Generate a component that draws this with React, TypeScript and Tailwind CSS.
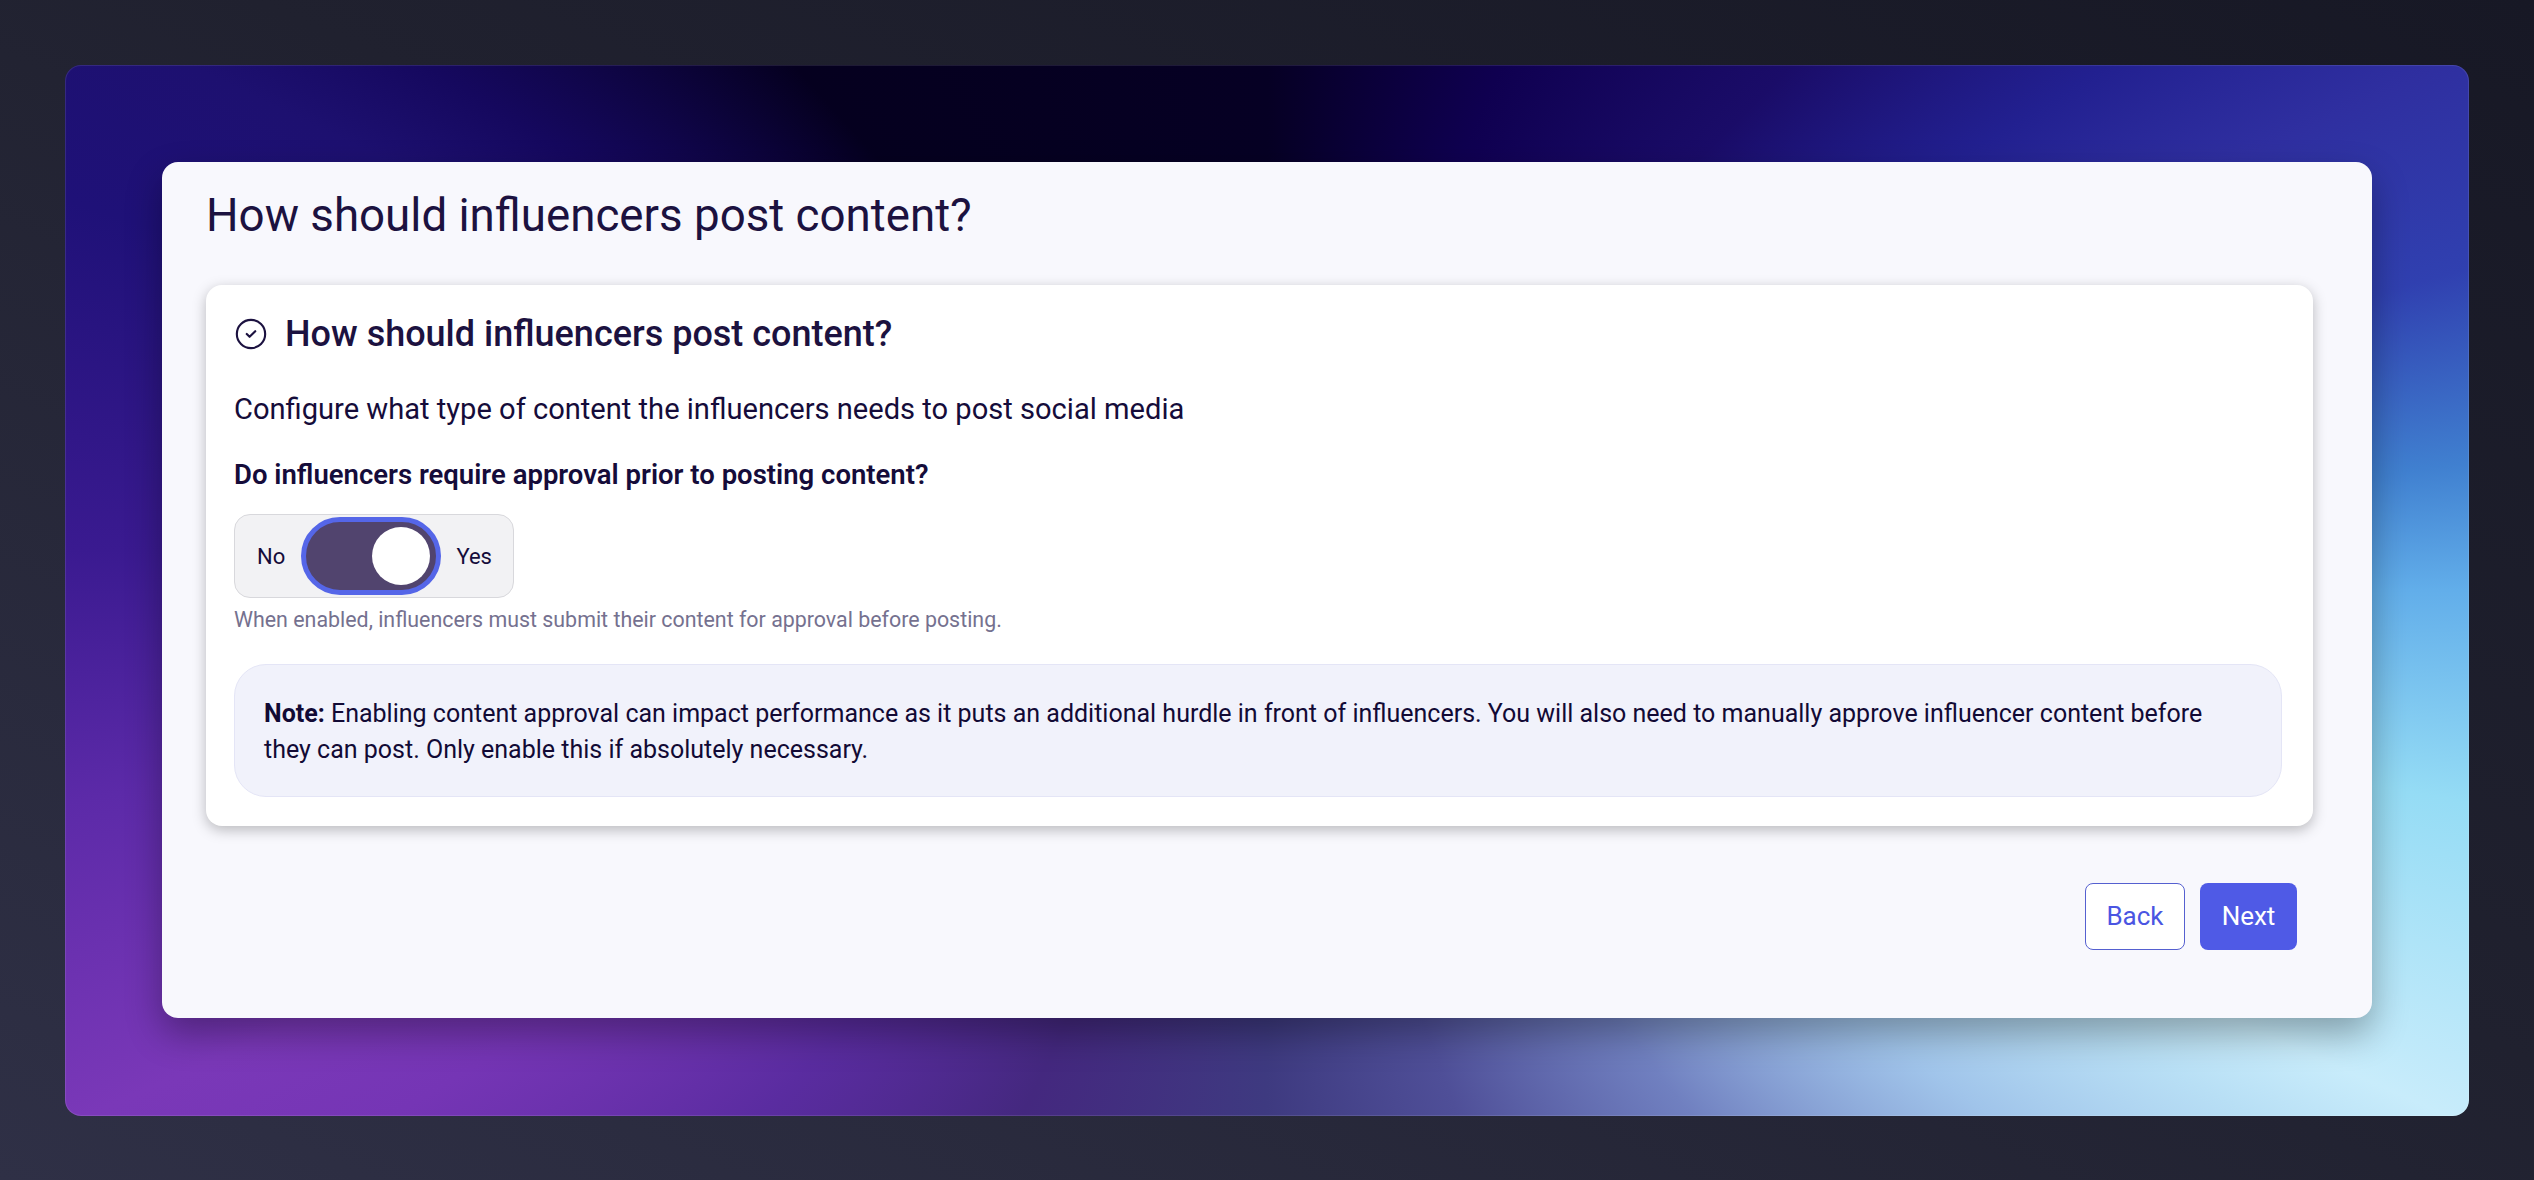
import { CircleCheck } from "lucide-react";

export default function App() {
  return (
    <div className="h-[1180px] w-full overflow-hidden bg-[linear-gradient(205deg,#171825_0%,#20212f_45%,#2f3046_100%)] px-[65px] pt-[65px] pb-[64px] font-['Roboto',sans-serif]">
      <div className="flex h-full flex-col rounded-2xl border border-white/10 bg-[conic-gradient(from_0deg_at_50%_50%,#060024_0deg,#0f0050_24deg,#1a0c68_45deg,#222090_58deg,#2f2fa0_66deg,#3040b0_75deg,#4080d0_84deg,#62aeea_90deg,#95dcf5_100deg,#c8ecfb_114deg,#b8dff5_118deg,#a0c4ea_126deg,#7080c0_141deg,#4f4f98_160deg,#3e3a80_180deg,#44287f_205deg,#5a2ca0_224deg,#7535b5_239deg,#7a38b8_246deg,#5c2aa8_260deg,#3a1a90_272deg,#1f1178_288deg,#1d1070_296deg,#15085e_302deg,#05001f_318deg,#060024_360deg)] bg-origin-border px-[96px] pt-[96px]">
        <div className="h-[856px] rounded-2xl bg-[#f8f8fd] pt-[26px] pr-[59px] pl-[44px] shadow-[0_16px_36px_rgba(0,0,0,0.32)]">
          <h1 className="text-[45.7px] leading-[56px] font-normal text-[#1c1240]">How should influencers post content?</h1>
          <div className="mt-[41px] h-[541px] rounded-2xl bg-white pt-[26px] pr-[31px] pl-[28px] shadow-[0_4px_14px_rgba(0,0,0,0.26)]">
            <div className="flex h-[46px] items-center gap-[17px]">
              <CircleCheck size={34} strokeWidth={1.5} className="text-[#1c1240]" />
              <h2 className="text-[36px] leading-[46px] font-medium text-[#1c1240]">How should influencers post content?</h2>
            </div>
            <p className="mt-[32px] text-[29.1px] leading-[40px] text-[#150c3a]">Configure what type of content the influencers needs to post social media</p>
            <p className="mt-[26px] text-[27.5px] leading-[40px] font-semibold text-[#150c3a]">Do influencers require approval prior to posting content?</p>
            <div className="mt-[19px] flex h-[84px] w-[280px] items-center justify-between rounded-2xl border border-[#d8d8dc] bg-[#f2f2f4] pr-[21px] pl-[22px] text-[22px] text-[#150c3a]">
              <span>No</span>
              <div className="flex h-[78px] w-[140px] items-center justify-end rounded-full border-[5px] border-[#5566e8] bg-[#51446e] pr-[6px]">
                <div className="size-[58px] rounded-full bg-white" />
              </div>
              <span>Yes</span>
            </div>
            <p className="mt-[7px] text-[21.4px] leading-[30px] text-[#75718f]">When enabled, influencers must submit their content for approval before posting.</p>
            <div className="mt-[29px] h-[133px] rounded-[32px] border border-[#e4e5f6] bg-[#f1f2fb] px-[29px] pt-[31px] text-[25px] leading-[35.5px] text-[#120a35]">
              <strong className="font-bold">Note:</strong> Enabling content approval can impact performance as it puts an additional hurdle in front of influencers. You will also need to manually approve influencer content before they can post. Only enable this if absolutely necessary.
            </div>
          </div>
          <div className="mt-[57px] flex justify-end gap-[15px] pr-[16px]">
            <button className="h-[67px] w-[100px] rounded-lg border-[1.5px] border-[#5560d0] bg-white text-[26px] text-[#4a55e2]">Back</button>
            <button className="h-[67px] w-[97px] rounded-lg bg-[#4f5ae6] text-[26px] text-white">Next</button>
          </div>
        </div>
      </div>
    </div>
  );
}
